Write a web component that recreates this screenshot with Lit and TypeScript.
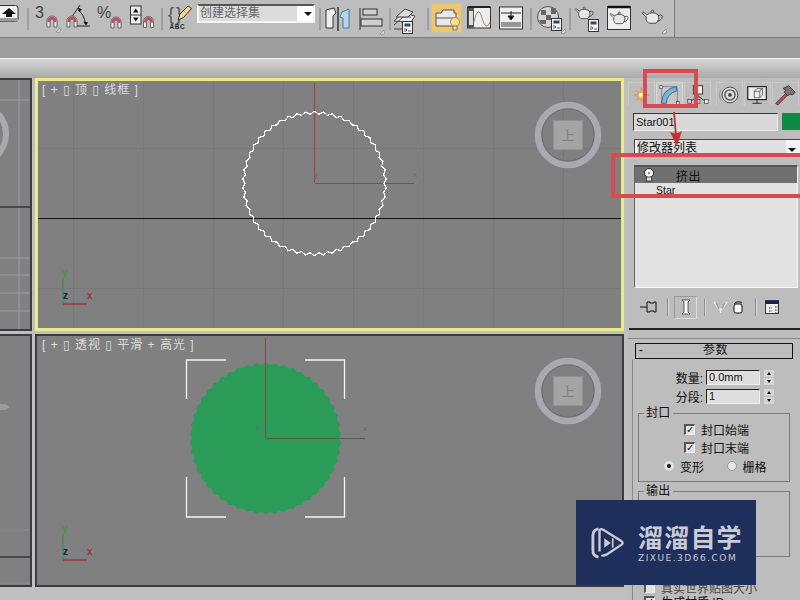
import { LitElement, html, css, svg } from "lit";
import { customElement } from "lit/decorators.js";

const magnet = (x: number, y: number) => svg`<g transform="translate(${x} ${y})">
  <path d="M1 11V5a5 5 0 0 1 10 0v6H8V5a2 2 0 0 0-4 0v6Z" fill="#f4f0f0" stroke="#4a4a4a" stroke-width=".8"/>
  <path d="M1.500 6V5a4.500 4.500 0 0 1 9 0v1H8V5a2 2 0 0 0-4 0v1Z" fill="#b9555a"/>
</g>`;
const corner = (x: number, y: number) => svg`<path d="M${x} ${y}l4-4v4Z" fill="#fff" stroke="#333" stroke-width=".4"/>`;
const teapot = (x: number, y: number, s = 1) => svg`<g transform="translate(${x} ${y}) scale(${s})">
  <path d="M6 7Q12 3 18 7Q20 13 16 16H8Q4 13 6 7Z" fill="#e8e8e8" stroke="#444"/>
  <path d="M6 10 1 5l1-1 4 3" fill="#e8e8e8" stroke="#444"/>
  <path d="M18 8Q24 6 22 11 20 14 17 14" fill="none" stroke="#444"/>
  <circle cx="12" cy="3.600" r="1.300" fill="#e8e8e8" stroke="#444"/>
</g>`;
const sheet = (x: number, y: number) => svg`<g transform="translate(${x} ${y})">
  <rect x=".5" y=".5" width="10" height="12" fill="#f2f2f2" stroke="#333"/>
  <rect x="2.500" y="2.500" width="6" height="3" fill="#2e4a6a"/>
  <path d="M2 8h2l1 1-1 1H2M6 10h3" fill="none" stroke="#333" stroke-width=".8"/>
</g>`;
const divider = svg`<path d="M1 4v22" stroke="#8a8a8a" stroke-width="1.200"/>`;

type Tool = { x: number; w: number; body: unknown };

const tools: Tool[] = [
  { x: 0, w: 19, body: svg`<rect x="-6" y="1.500" width="24" height="16" rx="2.500" fill="#f2f2f2" stroke="#333"/><rect x="-6" y="14" width="24" height="3.500" fill="#9a9a9a"/><path d="M2 10 9 4l7 6h-4v3H6v-3Z" fill="#111"/>` },
  { x: 27, w: 2, body: divider },
  { x: 35, w: 26, body: svg`<text x="0" y="14" class="nt">3</text>${magnet(11, 12)}${corner(21, 28)}` },
  { x: 65, w: 26, body: svg`<path d="M4 17 15 1M13 6Q19 10 20.500 20M12 22H25" fill="none" stroke="#222" stroke-width="1"/><path d="M18.500 18l2.500 3.500 2-3.500Z" fill="#111"/><path d="M13 3.500l4 2-3 2.500Z" fill="#111"/>${magnet(1, 12)}` },
  { x: 97, w: 26, body: svg`<text x="0" y="14" class="nt">%</text>${magnet(13, 13)}` },
  { x: 130, w: 24, body: svg`<rect x=".5" y="2" width="10.500" height="18" fill="#eee" stroke="#333"/><path d="M1 11h10" stroke="#333"/><path d="M3 8.500 5.750 4.500 8.500 8.500ZM3 13.500 5.750 17.500 8.500 13.500Z" fill="#111"/>${magnet(12.5, 12.5)}` },
  { x: 161, w: 2, body: divider },
  { x: 168, w: 25, body: svg`<text x="0" y="16" class="br">{</text><text x="8" y="16" class="br">}</text><path d="M10 16 12 10 20 2l3.500 2.500-8 9Z" fill="#f1d98a" stroke="#333"/><text x="1.500" y="25" class="abc">ABC</text>` },
];
const tools2: Tool[] = [
  { x: 319, w: 2, body: divider },
  { x: 325, w: 26, body: svg`<path d="M1 6 9 4l2 5-3 3v12H1Z" fill="#eee" stroke="#333"/><path d="M13 3v24" stroke="#222" stroke-width="1.300"/><path d="M24 5l-7 3-2 5 3 1v10h6Z" fill="#b4d7ec" stroke="#4a7a9a"/>` },
  { x: 359, w: 26, body: svg`<path d="M1 4v22" stroke="#333"/><rect x="4" y="5" width="14" height="6" fill="#cfcfcf" stroke="#333"/><rect x="2" y="15" width="21" height="7" fill="#cfcfcf" stroke="#333"/>${corner(21, 30)}` },
  { x: 389, w: 2, body: divider },
  { x: 393, w: 27, body: svg`<path d="M1 17 10 9l12 3-4 6Z" fill="#eee" stroke="#444"/><path d="M1 21 10 13h8M1 25h13" fill="none" stroke="#444"/><path d="M3 13 12 5l8 3-5 5Z" fill="#ddd" stroke="#444"/>${sheet(9, 17)}` },
  { x: 427, w: 2, body: divider },
];
const tools3: Tool[] = [
  { x: 466, w: 24, body: svg`<rect x=".5" y="3" width="23" height="21" fill="#eee" stroke="#333"/><rect x="1" y="3" width="6" height="21" fill="#555"/><rect x="2" y="7" width="4" height="14" fill="#ddd"/><path d="M7 18Q11 0 15 14T23 18" fill="none" stroke="#a86"/><path d="M1 3h22" stroke="#222" stroke-width="2"/>` },
  { x: 498, w: 24, body: svg`<rect x=".5" y="3" width="23" height="22" fill="#f0f0f0" stroke="#333"/><rect x="2" y="18" width="20" height="5" fill="#999"/><path d="M2 9h20M9 12h6l-3 4Z" stroke="#222" fill="#111"/><path d="M12 7v6" stroke="#222"/>` },
  { x: 529, w: 2, body: divider },
  { x: 536, w: 27, body: svg`<circle cx="11" cy="13" r="10.500" fill="#d4d4d4" stroke="#555"/><path d="M4 6h5v5H4ZM14 4h5v6h-5ZM9 11h5v5H9ZM2 16h7v4H4ZM14 16h6l-3 5h-3Z" fill="#666"/>${sheet(14, 14)}${corner(24, 29)}` },
  { x: 568, w: 2, body: divider },
  { x: 574, w: 24, body: svg`${teapot(-1, 1, 0.85)}${sheet(13, 15)}` },
  { x: 606, w: 24, body: svg`<rect x=".5" y="2.500" width="23" height="23" fill="#eee" stroke="#333"/><path d="M1 3h22" stroke="#111" stroke-width="2.500"/>${teapot(2, 6, 0.85)}` },
  { x: 639, w: 26, body: svg`${teapot(1, 4, 0.95)}${corner(22, 29)}` },
];

@customElement("app-root")
export class AppRoot extends LitElement {
  static styles = css`
    :host { display: block; width: 800px; height: 600px; position: relative; overflow: hidden; background: #bdbdbd;
      font-family: "Liberation Sans", "Noto Sans CJK SC", sans-serif; color: #111; }
    svg { display: block; flex: none; }
    .nt { font: 16px "Liberation Sans", sans-serif; fill: #444; }
    .br { font: 18px "Liberation Sans", sans-serif; fill: #555; }
    .abc { font: bold 6.500px "Liberation Sans", sans-serif; fill: #222; letter-spacing: .6px; }

    .top { height: 37px; display: flex; background: #b8b8b8; border-bottom: 1px solid #7a7a7a; }
    .toolbar { width: 675px; flex: none; height: 37px; box-sizing: border-box; display: flex; align-items: flex-start;
      padding-top: 4px; border-right: 1px solid #7a7a7a; background: #bdbdbd; }
    .combo { width: 118px; height: 19px; margin-left: 4px; box-sizing: border-box; background: #fdfdfd; border: 2px solid #f6f6f6;
      border-top-color: #555; display: flex; align-items: center; font-size: 12px; color: #666; }
    .combo span { width: 98px; height: 100%; background: #dcdcdc; line-height: 15px; padding-left: 1px; box-sizing: border-box; }
    .combo i { width: 0; height: 0; border: 4px solid transparent; border-top: 4px solid #111; border-bottom: 0; margin-left: 7px; }
    .active { width: 31px; height: 30px; background: #ecc76c; border: 1px solid #c9c2a6; box-sizing: border-box; flex: none; margin-left: 2px; margin-top: -1px; }
    .band { height: 20px; background: #9e9e9e; }
    .strip { height: 19px; border-top: 1px solid #f2f2f2; background: linear-gradient(#d6d6d6, #a9a9a9); }

    .main { display: flex; height: 522px; }
    .views { display: grid; grid-template-columns: 32px 589px; grid-template-rows: 253px 253px; gap: 3px; width: 628px; flex: none; align-content: start; background: #bfbfbf; box-sizing: border-box; }
    .vp { position: relative; box-sizing: border-box; background: #808080; overflow: hidden; }
    .vp svg { width: 100%; height: 100%; }
    .side { border: 2px solid #3b3b42; border-left: 0; }
    .cur { border: 3px solid #ecea8c; }
    .plain { border: 2px solid #3b3b42; }
    .lbl { font: 12px "Liberation Sans", "DejaVu Sans", "Noto Sans CJK SC", sans-serif; fill: #dcdcdc; letter-spacing: 1px; }
    .axl { font: bold 10px "Liberation Sans", sans-serif; }
    .cube { font: 13px "Noto Sans CJK SC", sans-serif; fill: #808080; }
    .fade { font: 8px "Liberation Sans", sans-serif; fill: #6a6a6a; }
    .stair { shape-rendering: crispEdges; }

    .panel { flex: 1; min-width: 0; display: flex; flex-direction: column; background: #bdbdbd; }
    .panel > * { flex: none; }
    .tabs { display: flex; height: 24px; margin-top: 4px; }
    .tab { width: 27px; height: 24px; box-sizing: border-box; border: 1px solid #c8c8c8; border-bottom: 0; flex: none; margin-right: 1px; }
    .tab svg { width: 100%; height: 100%; }
    .tab.on { border-color: #d8d8d8; border-radius: 2px 2px 0 0; background: #c6c6c6; }
    .gap { width: 4px; flex: none; }
    .name { display: flex; margin: 7px 0 0 5px; gap: 4px; height: 18px; }
    .name div:first-child { width: 145px; box-sizing: border-box; background: #d9d9d9; border: 1px solid #f0f0f0; border-top-color: #333; border-left-color: #333; font-size: 11px; line-height: 16px; padding-left: 2px; }
    .swatch { width: 18px; height: 17px; background: #0f8a45; }
    .mod { margin: 8px 0 0 6px; height: 18px; box-sizing: border-box; background: #f4f4f4; border-left: 1px solid #444; border-top: 1px solid #444; font-size: 12px; line-height: 16px; padding-left: 2px; display: flex; justify-content: space-between; overflow: hidden; }
    .mod span { background: #e0e0e0; width: 150px; margin-right: 2px; }
    .mod i { width: 0; height: 0; border: 4px solid transparent; border-top: 4px solid #111; border-bottom: 0; margin: 8px 4px 0 0; }
    .stack { margin: 8px 2px 0 6px; height: 123px; box-sizing: border-box; background: #e2e2e2; border: 1px solid #f8f8f8; border-top: 2px solid #555; border-left-color: #666; }
    .row1 { height: 16px; background: #707070; display: flex; align-items: center; font-size: 12px; padding-left: 8px; }
    .row1 span { margin-left: 21px; letter-spacing: .6px; }
    .row2 { font-size: 10.500px; padding-left: 21px; line-height: 15px; }
    .btns { display: flex; align-items: center; height: 24px; margin-top: 7px; padding-left: 12px; }
    .pin { margin-right: 10px; }
    .sep { width: 1px; height: 17px; background: #8c8c8c; border-right: 1px solid #d8d8d8; flex: none; }
    .ib { width: 23px; height: 23px; box-sizing: border-box; border: 1px solid #dcdcdc; border-top-color: #999; border-left-color: #999; margin: 0 7px 0 5px; flex: none; display: flex; justify-content: center; align-items: center; }
    .funnel { margin: 0 4px 0 7px; }
    .bin { margin: 0 11px 0 0; }
    .cfg { margin-left: 8px; }
    .rule { height: 2px; background: #222; margin: 9px 0 0 1px; }
    .rolls { margin-top: 8px; border-top: 1px solid #8a8a8a; padding: 4px 7px 0 7px; background: #bdbdbd; }
    .rhead { height: 16px; box-sizing: border-box; border: 1px solid #111; display: flex; font-size: 12px; line-height: 13px; }
    .rhead b { font-weight: normal; width: 14px; padding-left: 3px; }
    .rhead span { flex: 1; text-align: center; padding-right: 14px; letter-spacing: .5px; }
    .body { border-left: 1px solid #8a8a8a; margin-left: -3px; padding-left: 4px; }
    .fields { padding-top: 9px; }
    .field { display: grid; grid-template-columns: 66px 54px 11px; column-gap: 3px; height: 19px; align-items: center; font-size: 12px; }
    .field label { text-align: right; }
    .input { height: 15px; box-sizing: border-box; background: #dedede; border: 1px solid #f0f0f0; border-top-color: #222; border-left-color: #222; font-size: 11px; line-height: 13px; padding-left: 2px; }
    .spin { height: 15px; display: flex; flex-direction: column; margin-left: 1px; gap: 1px; }
    .spin i { flex: 1; background: #d6d6d6; display: flex; justify-content: center; align-items: center; }
    .spin i::after { content: ""; border: 2.500px solid transparent; }
    .spin i:first-child::after { border-bottom: 3px solid #111; border-top: 0; }
    .spin i:last-child::after { border-top: 3px solid #111; border-bottom: 0; }
    .grp { position: relative; border: 1px solid #7c7c7c; margin: 0 3px 0 1px; box-sizing: border-box; font-size: 12px; }
    .grp > em { position: absolute; left: 5px; top: -8px; padding: 0 2px; background: #bdbdbd; font-style: normal; line-height: 15px; letter-spacing: .3px; }
    .g1 { height: 69px; margin-top: 7px; padding-top: 6px; }
    .g2 { height: 66px; margin-top: 9px; }
    .chk { display: flex; align-items: center; height: 18px; margin-left: 45px; gap: 6px; }
    .box { width: 11px; height: 11px; box-sizing: border-box; background: #e4e4e4; border: 1px solid #eee; border-top: 2px solid #555; border-left: 2px solid #555; font: bold 10px/8px "DejaVu Sans", sans-serif; text-align: center; color: #111; font-style: normal; flex: none; }
    .radios { display: flex; height: 20px; align-items: center; margin-left: 25px; }
    .radios span { display: flex; align-items: center; gap: 6px; width: 67px; }
    .radios i { width: 10px; height: 10px; border-radius: 50%; background: #e8e8e8; box-sizing: border-box; border: 1px solid #999; flex: none; }
    .radios i.on { border: 3px solid #e0e0e0; background: #111; }
    .faded { display: flex; align-items: center; gap: 6px; font-size: 12px; margin: 24px 0 0 7px; color: #444; height: 12px; white-space: nowrap; }
    .last { display: flex; gap: 6px; align-items: center; font-size: 12px; margin: 1px 0 0 7px; height: 14px; }

    .red { position: absolute; border: 4px solid #d84a4d; box-sizing: border-box; pointer-events: none; }
    .r1 { left: 643px; top: 69px; width: 55px; height: 39px; }
    .r2 { left: 611px; top: 153px; width: 195px; height: 45px; }
    .arrow { position: absolute; left: 665px; top: 112px; }
    .mark { position: absolute; left: 576px; top: 500px; width: 180px; height: 85px; background: #1f2f5c; display: flex; align-items: center; padding-left: 15px; box-sizing: border-box; gap: 13px; color: #c9ccd4; }
    .mark b { display: block; font: bold 25px/26px "Noto Sans CJK SC", sans-serif; letter-spacing: 1.200px; white-space: nowrap; }
    .mark small { display: block; font: 9px/10px "DejaVu Sans", sans-serif; letter-spacing: 1.500px; white-space: nowrap; margin-top: 4px; }
  `;

  private row(items: Tool[], start: number) {
    let end = start;
    return items.map((t) => {
      const m = t.x - end;
      end = t.x + t.w;
      return html`<svg width=${t.w} height="30" viewBox="0 0 ${t.w} 30" overflow="visible" style="margin-left:${m}px">${t.body}</svg>`;
    });
  }

  private star(cx: number, cy: number, r: number, d: number, n: number) {
    const p: string[] = [];
    for (let i = 0; i < n * 2; i++) {
      const a = (i * Math.PI) / n - Math.PI / 2;
      const rr = i % 2 ? r - d : r;
      p.push(`${(cx + rr * Math.cos(a)).toFixed(1)},${(cy + rr * Math.sin(a)).toFixed(1)}`);
    }
    return p.join(" ");
  }

  private grid(x0: number, x1: number, y0: number, y1: number, stroke = "#797979") {
    const l = [];
    for (let x = 73; x < 620; x += 70) l.push(svg`<path d="M${x + 0.5} ${y0}V${y1}" stroke=${stroke}/>`);
    for (let y = y0 + (((148 - y0) % 70) + 70) % 70; y < y1; y += 70) l.push(svg`<path d="M${x0} ${y + 0.5}H${x1}" stroke=${stroke}/>`);
    return l;
  }

  private cube(cx: number, cy: number) {
    return svg`<circle cx=${cx} cy=${cy} r="30" fill="none" stroke="#a9a9af" stroke-width="6.500"/>
      <circle cx=${cx} cy=${cy} r="26" fill="none" stroke="#6e6e74"/>
      <rect x=${cx - 14.5} y=${cy - 14.5} width="29" height="29" fill="#a4a4a4"/>
      <text x=${cx} y=${cy + 5} text-anchor="middle" class="cube">上</text>`;
  }

  private tripod(x: number, y: number) {
    return svg`<path d="M${x} ${y}V${y - 25}" stroke="#3f8a45" stroke-width="1.200"/>
      <path d="M${x} ${y}H${x + 24}" stroke="#a33" stroke-width="1.500"/>
      <text x=${x - 1} y=${y - 28} class="axl" fill="#3f9a45">y</text>
      <text x=${x + 24} y=${y - 5} class="axl" fill="#b03333">x</text>
      <text x=${x} y=${y - 5} class="axl" fill="#12204a">z</text>`;
  }

  render() {
    return html`
      <div class="top">
        <div class="toolbar">
          ${this.row(tools, 0)}
          <div class="combo"><span>创建选择集</span><i></i></div>
          ${this.row(tools2, 315)}
          <div class="active">
            <svg width="29" height="28" viewBox="0 0 29 28"><path d="M4 9h5l2-3h11v3h2v13H4Z" fill="#e8e8e8" stroke="#555"/><path d="M4 14h20" stroke="#555"/><circle cx="23" cy="18" r="4.500" fill="#f6e27a" stroke="#a88"/><path d="M21 22h4v4h-4Z" fill="#ddd" stroke="#777"/></svg>
          </div>
          ${this.row(tools3, 461)}
        </div>
      </div>
      <div class="band"></div>
      <div class="strip"></div>
      <div class="main">
        <div class="views">
          <div class="vp side">
            <svg viewBox="0 80 30 249" preserveAspectRatio="none">
              <path d="M19 80V329M0 100H30M0 258H30M0 275H30M0 293H30M0 311H30" stroke="#9c9c9c"/>
              <path d="M0 207H30" stroke="#111"/>
              <circle cx="-24" cy="134" r="30" fill="none" stroke="#a9a9af" stroke-width="6"/>
            </svg>
          </div>
          <div class="vp cur">
            <svg viewBox="38 81 583 247">
              ${this.grid(38, 621, 81, 328)}
              <path d="M38 218.500H621" stroke="#111" stroke-width="1.200"/>
              <path d="M314.500 83V183" stroke="#9c4a48" stroke-width="1.200"/>
              <path d="M315 183.500H414" stroke="#5c5c5c" stroke-width="1.200"/>
              <text x="413" y="177" class="fade">x</text>
              <text x="314" y="177" class="fade">y</text>
              <polygon class="stair" points=${this.star(314.5, 183.5, 72, 2.6, 50)} fill="none" stroke="#fff" stroke-width="1.200"/>
              ${this.cube(568, 135)}
              ${this.tripod(63, 304)}
              <text x="42" y="94" class="lbl">[ + ▯ 顶 ▯ 线框 ]</text>
            </svg>
          </div>
          <div class="vp side">
            <svg viewBox="0 336 30 249" preserveAspectRatio="none">
              <path d="M0 530H30M0 583H30" stroke="#8e8e8e"/>
              <path d="M0 557H30" stroke="#111"/>
              <path d="M0 404h6l4 3-4 3H0" fill="#9a9a9a"/>
            </svg>
          </div>
          <div class="vp plain">
            <svg viewBox="37 336 585 249">
              <polygon points=${this.star(265.5, 438.5, 76, 2.5, 50)} fill="#2b9c58"/>
              <path d="M265.500 338V438" stroke="#8c4a46" stroke-width="1.200"/>
              <path d="M266 438.500H365" stroke="#4f5f56" stroke-width="1.200"/>
              <text x="363" y="431" class="fade">x</text>
              <text x="256" y="429" class="fade">y</text>
              <path d="M226 360H186.500V399M305 360H344.500V399M186.500 477V517H226M344.500 477V517H305" fill="none" stroke="#f4f4f4" stroke-width="1.300"/>
              ${this.cube(568, 391)}
              ${this.tripod(63, 560)}
              <text x="42" y="349" class="lbl">[ + ▯ 透视 ▯ 平滑 + 高光 ]</text>
            </svg>
          </div>
        </div>
        <div class="panel">
          <div class="tabs">
            <div class="tab">
              <svg viewBox="-4 -4 33 31"><path d="M12 2l1.500 7L20 6l-4 5 7 1-7 2 4 5-6-3-1 6-2-6-5 3 3-5-7-2 7-1-4-5 6 3Z" fill="#f6c25a" stroke="#cf7b2c" stroke-width=".6"/><circle cx="12" cy="12" r="3" fill="#fff4c0"/></svg>
            </div>
            <div class="tab on">
              <svg viewBox="0 0 27 23"><path d="M5 21Q5 6 21 3v5Q11 10 10 21Z" fill="#7ab2dc" stroke="#3d6d92"/><rect x="3" y="2" width="3" height="3" fill="#eee" stroke="#333" stroke-width=".7"/><rect x="21" y="19" width="3" height="3" fill="#eee" stroke="#333" stroke-width=".7"/><path d="M5 5V21M6 3H22M22 4V19" fill="none" stroke="#555" stroke-width=".6"/></svg>
            </div>
            <div class="tab">
              <svg viewBox="0 0 27 23"><rect x="9" y="2" width="10" height="9" fill="#eee" stroke="#333"/><path d="M14 11v4M14 13 6 19M14 13l8 6" stroke="#333" fill="none"/><rect x="3" y="17" width="4" height="4" fill="#f0b8d8" stroke="#333" stroke-width=".7"/><rect x="12" y="17" width="4" height="4" fill="#eee" stroke="#333" stroke-width=".7"/><rect x="21" y="17" width="4" height="4" fill="#eee" stroke="#333" stroke-width=".7"/></svg>
            </div>
            <div class="gap"></div>
            <div class="tab">
              <svg viewBox="0 0 27 23"><circle cx="14" cy="12" r="8.500" fill="#ddd" stroke="#444"/><circle cx="14" cy="12" r="5.500" fill="none" stroke="#555" stroke-width="1.500"/><circle cx="14" cy="12" r="2" fill="#444"/><path d="M4 6Q1 12 4 18" fill="none" stroke="#999"/></svg>
            </div>
            <div class="tab">
              <svg viewBox="0 0 27 23"><rect x="3" y="3" width="20" height="14" fill="#eee" stroke="#222" stroke-width="1.300"/><path d="M10 8l3-3h6v7l-3 3h-6ZM10 8h6v7M16 8l3-3" fill="none" stroke="#444" stroke-width=".8"/><path d="M8 21h10M13 17v4" stroke="#222"/></svg>
            </div>
            <div class="tab">
              <svg viewBox="0 0 27 23"><path d="M3 21 15 9l2 2L5 23Z" fill="#b65a4e" stroke="#533"/><path d="M11 5 17 2l7 7-3 3-3-1-2 2-4-4 2-2Z" fill="#777" stroke="#333"/></svg>
            </div>
          </div>
          <div class="name"><div>Star001</div><div class="swatch"></div></div>
          <div class="mod"><span>修改器列表</span><i></i></div>
          <div class="stack">
            <div class="row1">
              <svg width="12" height="14" viewBox="0 0 12 14"><circle cx="6" cy="5" r="4.500" fill="#fff" stroke="#222"/><rect x="3.500" y="9" width="5" height="4" fill="#ddd" stroke="#222" stroke-width=".7"/><circle cx="6" cy="5" r="1.200" fill="#888"/></svg>
              <span>挤出</span>
            </div>
            <div class="row2">Star</div>
          </div>
          <div class="btns">
            <svg class="pin" width="17" height="14" viewBox="0 0 17 14"><path d="M0 7h7" stroke="#111"/><path d="M7 2h3v1h4V2h2v10h-2v-1h-4v1H7Z" fill="#bbb" stroke="#111"/></svg>
            <div class="sep"></div>
            <div class="ib"><svg width="10" height="16" viewBox="0 0 10 16"><path d="M1 1h8L7 3v10l2 2H1l2-2V3Z" fill="#fff" stroke="#333" stroke-width=".8"/></svg></div>
            <div class="sep"></div>
            <svg class="funnel" width="15" height="14" viewBox="0 0 15 14"><path d="M1 2 6 9h3l5-7M7.500 9V13" fill="none" stroke="#eee" stroke-width="1.300"/><path d="M3 3l3 6M12 3 9 9" stroke="#888"/></svg>
            <svg class="bin" width="12" height="16" viewBox="0 0 12 16"><rect x="2" y="5" width="8" height="9" rx="2" fill="#fff" stroke="#111"/><path d="M2 5Q6 1 10 4" fill="none" stroke="#111"/></svg>
            <div class="sep"></div>
            <svg class="cfg" width="16" height="15" viewBox="0 0 16 15"><rect x=".5" y=".5" width="13" height="13" fill="#eee" stroke="#333"/><path d="M1 1h13v3H1Z" fill="#14215c"/><path d="M4 8h3M4 11h3M10 7h5M10 10h5M10 13h5" stroke="#333" stroke-dasharray="1.500 1"/></svg>
          </div>
          <div class="rule"></div>
          <div class="rolls">
            <div class="rhead"><b>-</b><span>参数</span></div>
            <div class="body">
              <div class="fields">
                <div class="field"><label>数量:</label><div class="input">0.0mm</div><div class="spin"><i></i><i></i></div></div>
                <div class="field"><label>分段:</label><div class="input">1</div><div class="spin"><i></i><i></i></div></div>
              </div>
              <div class="grp g1">
                <em>封口</em>
                <div class="chk"><i class="box">✓</i>封口始端</div>
                <div class="chk"><i class="box">✓</i>封口末端</div>
                <div class="radios"><span><i class="on"></i>变形</span><span><i></i>栅格</span></div>
              </div>
              <div class="grp g2"><em>输出</em></div>
              <div class="faded"><i class="box"></i>真实世界贴图大小</div>
              <div class="last"><i class="box">✓</i>生成材质 ID</div>
            </div>
          </div>
        </div>
      </div>

      <div class="red r1"></div>
      <div class="red r2"></div>
      <svg class="arrow" width="22" height="36" viewBox="0 0 22 36"><path d="M9 0 11 24" stroke="#b8383a" stroke-width="1.800"/><path d="M5 20l7 14 5-15Q11 23 5 20Z" fill="#c8302f"/></svg>

      <div class="mark">
        <svg width="34" height="38" viewBox="0 0 36 38"><path d="M8 34Q2 33 2 27V11Q2 5 8 4" fill="none" stroke="#c9ccd4" stroke-width="3"/><path d="M9 28V7Q9 3 13 5L32 17Q35 19 32 21L17 31Q13 33 11 32" fill="none" stroke="#c9ccd4" stroke-width="2.500"/><path d="M14 14l7 5-7 5Z" fill="#c9ccd4"/><path d="M23 14v10" stroke="#c9ccd4" stroke-width="1.800"/></svg>
        <div><b>溜溜自学</b><small>ZIXUE.3D66.COM</small></div>
      </div>
    `;
  }
}
